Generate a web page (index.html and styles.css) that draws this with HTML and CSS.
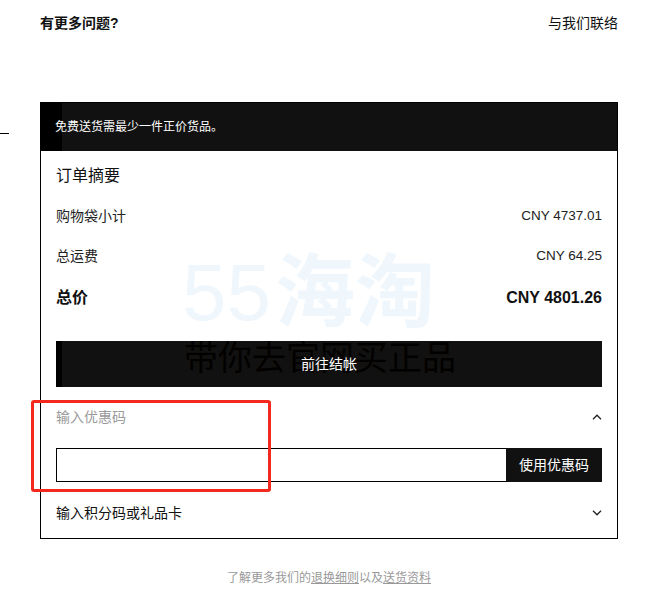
FILE: index.html
```html
<!DOCTYPE html>
<html lang="zh-CN">
<head>
<meta charset="utf-8">
<title>订单摘要</title>
<link rel="stylesheet" href="styles.css">
</head>
<body>
<div class="page">
  <div class="help-row">
    <span class="help-title">有更多问题?</span>
    <a class="help-link">与我们联络</a>
  </div>

  <section class="card">
    <div class="watermark-logo" aria-hidden="true">55<span class="wm-cjk">海淘</span></div>
    <div class="notice">免费送货需最少一件正价货品。</div>
    <div class="card-body">
      <h2 class="summary-title">订单摘要</h2>
      <div class="line-row"><span>购物袋小计</span><span class="amount">CNY 4737.01</span></div>
      <div class="line-row"><span>总运费</span><span class="amount">CNY 64.25</span></div>
      <div class="line-row total-row"><span>总价</span><span class="amount">CNY 4801.26</span></div>
      <button class="checkout-btn"><span class="wm-slogan" aria-hidden="true">带你去官网买正品</span><span class="checkout-label">前往结帐</span></button>

      <div class="toggle-row promo-head">
        <span class="muted">输入优惠码</span>
        <svg class="chev" width="10" height="6" viewBox="0 0 10 6"><polyline points="1,5.2 5,1.2 9,5.2" fill="none" stroke="#222" stroke-width="1.3"/></svg>
      </div>
      <div class="promo-form">
        <input class="promo-input" type="text">
        <button class="promo-btn">使用优惠码</button>
      </div>
      <div class="toggle-row gift-head">
        <span>输入积分码或礼品卡</span>
        <svg class="chev" width="10" height="6" viewBox="0 0 10 6"><polyline points="1,0.8 5,4.8 9,0.8" fill="none" stroke="#222" stroke-width="1.3"/></svg>
      </div>
    </div>
  </section>

  <p class="foot-note">了解更多我们的<a class="ul">退换细则</a>以及<a class="ul">送货资料</a></p>
</div>
<div class="edge-mark"></div>
<div class="annot-box"></div>
</body>
</html>
```

FILE: styles.css
```css
html, body {
  margin: 0;
  padding: 0;
  background: #fff;
}
body {
  font-family: "Liberation Sans", "Noto Sans CJK SC", Arial, sans-serif;
  color: #111;
  position: relative;
  width: 648px;
  height: 601px;
  overflow: hidden;
}
.page {
  padding: 0 30px 0 40px;
}
.help-row {
  height: 46px;
  display: flex;
  align-items: center;
  justify-content: space-between;
  font-size: 14px;
  line-height: 16px;
}
.help-title {
  font-weight: bold;
}
.help-link {
  color: #111;
}
.card {
  position: relative;
  margin-top: 56px;
  border: 1px solid #000;
}
.notice {
  height: 48px;
  display: flex;
  align-items: center;
  padding-left: 14px;
  background: linear-gradient(to right, #000 21px, #111 21px);
  color: #fff;
  font-size: 12px;
  line-height: 14px;
}
.card-body {
  position: relative;
  padding: 5px 15px 0 15px;
}
.summary-title {
  margin: 0;
  height: 40px;
  display: flex;
  align-items: center;
  font-size: 16px;
  font-weight: normal;
  line-height: 18px;
}
.line-row {
  height: 40px;
  display: flex;
  align-items: center;
  justify-content: space-between;
  font-size: 14px;
  line-height: 16px;
  color: #222;
}
.amount {
  font-size: 13.5px;
}
.total-row {
  height: 44px;
  font-size: 16px;
  font-weight: bold;
  color: #111;
}
.total-row .amount {
  font-size: 16px;
}
.checkout-btn {
  position: relative;
  overflow: hidden;
  display: flex;
  align-items: center;
  justify-content: center;
  width: 100%;
  height: 46px;
  margin-top: 21px;
  border: 0;
  padding: 0;
  background: linear-gradient(to right, #000 6px, #111 6px);
  color: #fff;
  font-family: inherit;
  font-size: 14px;
  line-height: 16px;
}
.checkout-label {
  position: relative;
}
.wm-slogan {
  position: absolute;
  left: 128px;
  top: 0;
  font-size: 34px;
  line-height: 34px;
  color: #030100;
  white-space: nowrap;
}
.watermark-logo {
  position: absolute;
  left: 141px;
  top: 150px;
  font-size: 80px;
  line-height: 80px;
  color: #eff7fd;
  white-space: nowrap;
  pointer-events: none;
}
.wm-cjk {
  font-weight: bold;
  margin-left: 4px;
}
.toggle-row {
  display: flex;
  align-items: center;
  justify-content: space-between;
  font-size: 14px;
  line-height: 16px;
}
.promo-head {
  height: 60px;
}
.muted {
  color: #9a9a9a;
}
.promo-form {
  display: flex;
  height: 34px;
  margin-top: 1px;
}
.promo-input {
  flex: 1;
  box-sizing: border-box;
  height: 34px;
  margin: 0;
  border: 1px solid #000;
  border-right: 0;
  padding: 0 8px;
  font-family: inherit;
  outline: none;
}
.promo-btn {
  width: 96px;
  height: 34px;
  border: 0;
  margin: 0;
  padding: 0;
  background: #111;
  color: #fff;
  font-family: inherit;
  font-size: 14px;
  line-height: 16px;
}
.gift-head {
  height: 50px;
  margin-top: 6px;
  color: #111;
}
.foot-note {
  margin: 31px 0 0 0;
  text-align: center;
  font-size: 12px;
  line-height: 16px;
  color: #999;
}
.ul {
  text-decoration: underline;
  color: #999;
}
.edge-mark {
  position: absolute;
  left: 0;
  top: 133px;
  width: 9px;
  height: 1px;
  background: #000;
}
.annot-box {
  position: absolute;
  left: 31px;
  top: 400px;
  width: 240px;
  height: 92px;
  box-sizing: border-box;
  border: 3px solid #f5281e;
  border-radius: 3px;
  pointer-events: none;
}
```
